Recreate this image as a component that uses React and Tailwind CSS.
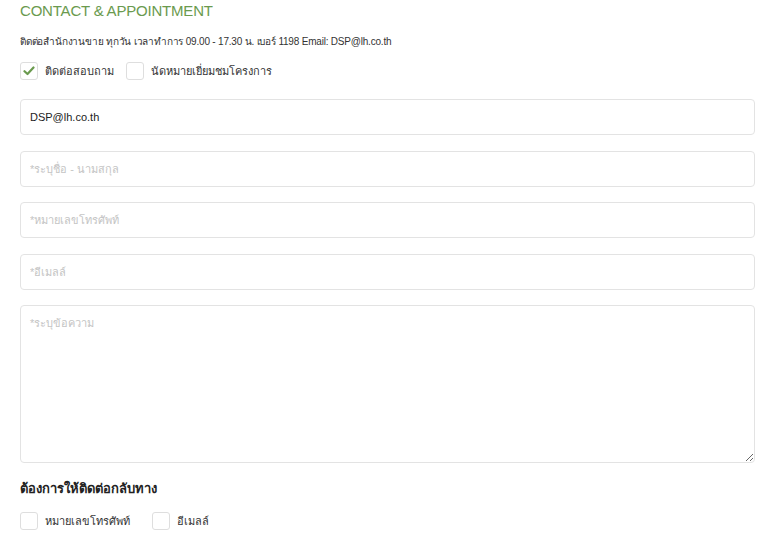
import { useState } from 'react';

function Check({ checked, label, onChange }) {
    return (
        <label className="flex items-center gap-[7px] cursor-pointer">
            <span className="w-[18px] h-[18px] rounded-[3px] border border-[#dedede] bg-white flex items-center justify-center">
                {checked && (
                    <svg width="12" height="10" viewBox="0 0 12 10">
                        <path d="M1.5 5.2 L4.5 8 L10.5 1.5" fill="none" stroke="#6a9a4e" strokeWidth="2.2" strokeLinecap="round" strokeLinejoin="round" />
                    </svg>
                )}
            </span>
            <input type="checkbox" className="hidden" checked={checked} onChange={onChange} />
            <span className="text-[11px] text-[#333]">{label}</span>
        </label>
    );
}

export default function App() {
    const [inquiry, setInquiry] = useState(true);
    const [visit, setVisit] = useState(false);
    const [byPhone, setByPhone] = useState(false);
    const [byEmail, setByEmail] = useState(false);

    const inputCls = "w-full h-[36px] px-[9px] rounded-[4px] border border-[#e3e3e3] bg-white text-[11px] text-[#222] placeholder:text-[#c4c4c4] outline-none";

    return (
        <div className="min-h-[559px] bg-white px-[20px] pt-[1px] text-[#333]" style={{ fontFamily: '"Liberation Sans", "Noto Sans", sans-serif' }}>
            <h2 className="text-[15px] leading-[20px] text-[#6a9a4e] tracking-[-0.2px]">CONTACT &amp; APPOINTMENT</h2>

            {/* office hours */}
            <p className="mt-[14px] text-[10px] leading-[14px] text-[#333] tracking-[-0.2px]">
                ติดต่อสำนักงานขาย ทุกวัน เวลาทำการ 09.00 - 17.30 น. เบอร์ 1198 Email: DSP@lh.co.th
            </p>

            <div className="mt-[13px] flex items-center gap-[12px]">
                <Check checked={inquiry} label="ติดต่อสอบถาม" onChange={() => setInquiry(!inquiry)} />
                <Check checked={visit} label="นัดหมายเยี่ยมชมโครงการ" onChange={() => setVisit(!visit)} />
            </div>

            <div className="mt-[19px] w-[735px] flex flex-col gap-[15.5px]">
                <input className={inputCls} defaultValue="DSP@lh.co.th" />
                <input className={inputCls} placeholder="*ระบุชื่อ - นามสกุล" />
                <input className={inputCls} placeholder="*หมายเลขโทรศัพท์" />
                <input className={inputCls} placeholder="*อีเมลล์" />
                <textarea className="w-full h-[158px] px-[9px] py-[9px] rounded-[4px] border border-[#e3e3e3] bg-white text-[11px] text-[#222] placeholder:text-[#c4c4c4] outline-none" placeholder="*ระบุข้อความ" />
            </div>

            <h3 className="mt-[17px] text-[13px] leading-[18px] font-bold text-[#222]">ต้องการให้ติดต่อกลับทาง</h3>

            <div className="mt-[14px] flex items-center gap-[22px]">
                <Check checked={byPhone} label="หมายเลขโทรศัพท์" onChange={() => setByPhone(!byPhone)} />
                <Check checked={byEmail} label="อีเมลล์" onChange={() => setByEmail(!byEmail)} />
            </div>
        </div>
    );
}
